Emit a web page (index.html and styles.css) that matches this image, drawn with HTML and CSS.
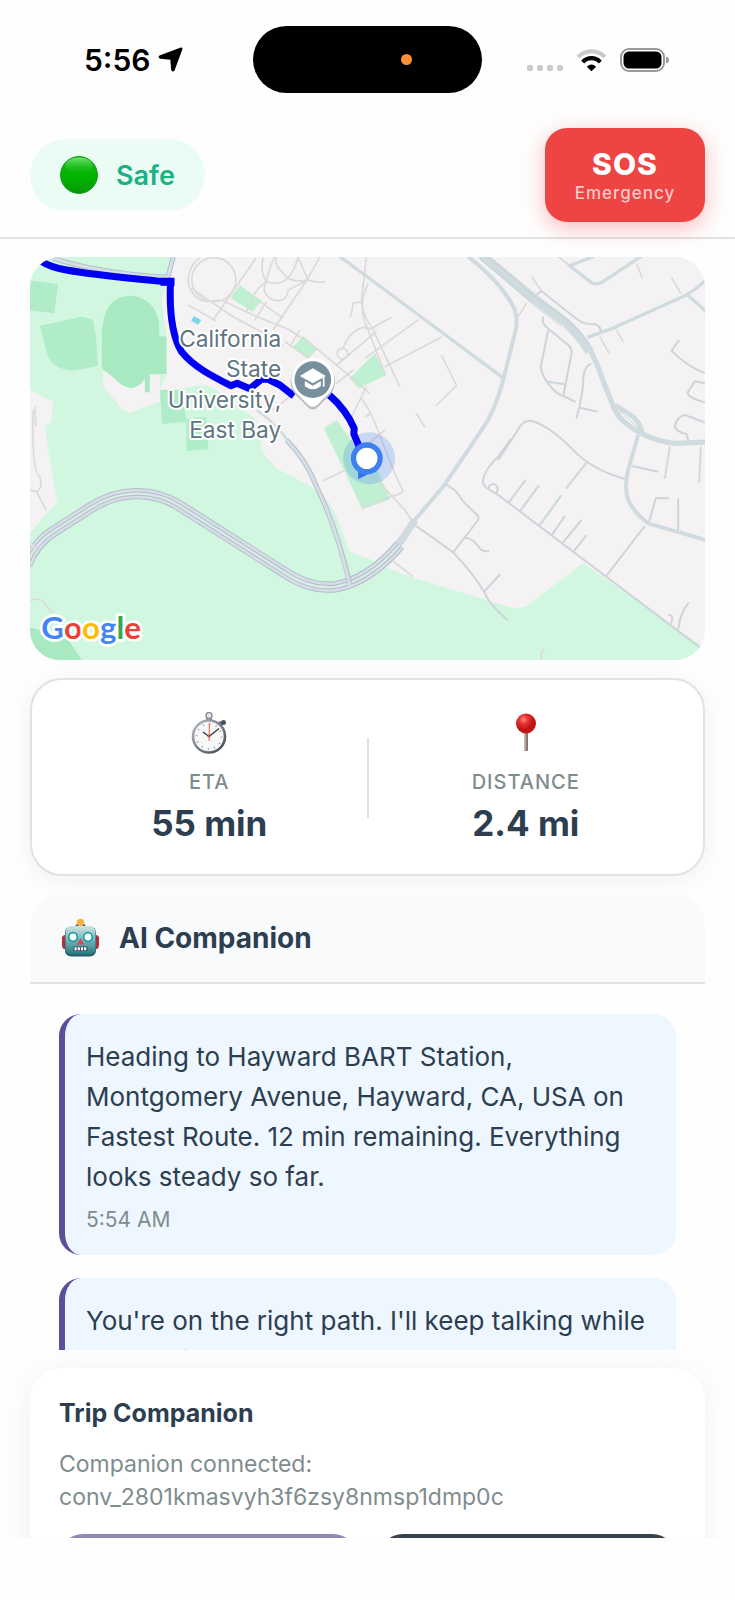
FILE: index.html
```
<!DOCTYPE html>
<html lang="en">
<head>
<meta charset="utf-8">
<meta name="viewport" content="width=device-width, initial-scale=1">
<title>Trip</title>
<link rel="stylesheet" href="styles.css">
</head>
<body>
<div class="app">
  <div class="status-bar">
    <div class="status-time">
      <span>5:56</span>
      <svg class="icon-location" viewBox="0 0 24 24" aria-hidden="true"><path d="M22.300 1.700L15 21.500Q14.300 23 13.800 21.500L13 11.800Q13 11 12 11L2.500 10.200Q1 9.800 2.500 9Z" stroke="#000" stroke-width="2.400" stroke-linejoin="round"/></svg>
    </div>
    <div class="island"><span class="island-dot"></span></div>
    <div class="status-icons">
      <svg class="icon-signal" viewBox="0 0 36 6" aria-hidden="true"><rect width="6" height="6" rx="2"/><rect x="10" width="6" height="6" rx="2"/><rect x="20" width="6" height="6" rx="2"/><rect x="30" width="6" height="6" rx="2"/></svg>
      <svg class="icon-wifi" viewBox="0 0 30 23" aria-hidden="true">
        <path d="M2 8.500A18.500 18.500 0 0 1 28 8.500" stroke="#cbcbcb"/>
        <path d="M6.500 13.500A11.500 11.500 0 0 1 23.500 13.500" stroke="#000"/>
        <path d="M10.500 18Q15 13.800 19.500 18L15 22.500Z" fill="#000"/>
      </svg>
      <svg class="icon-battery" viewBox="0 0 49 24" aria-hidden="true"><rect x="1" y="1" width="43" height="22" rx="8" fill="none" stroke="#999" stroke-width="2"/><rect x="3.500" y="3.500" width="38" height="17" rx="5.500"/><path d="M46 8.500Q49 9.500 49 12T46 15.500Z" fill="#999"/></svg>
    </div>
  </div>

  <header class="header">
    <div class="safe-pill">
      <svg class="icon-safe" viewBox="0 0 36 36" aria-hidden="true">
        <defs>
          <linearGradient id="ball" x2="0" y2="1"><stop offset="0" stop-color="#16b316"/><stop offset=".55" stop-color="#02b402"/><stop offset="1" stop-color="#049904"/></linearGradient>
          <linearGradient id="shine" x2="0" y2="1"><stop offset="0" stop-color="#6fe66c"/><stop offset="1" stop-color="#0fc00f" stop-opacity="0"/></linearGradient>
        </defs>
        <circle cx="18" cy="18" r="17.500" fill="url(#ball)" stroke="#0a8f12" stroke-width=".8"/>
        <ellipse cx="18" cy="9.500" rx="13" ry="8" fill="url(#shine)"/>
      </svg>
      <span>Safe</span>
    </div>
    <button class="sos" type="button"><span class="sos-title">SOS</span><span class="sos-sub">Emergency</span></button>
  </header>

  <main class="content">
    <section class="map" aria-label="Map">
      <svg class="map-canvas" viewBox="89 771 2028 1209" preserveAspectRatio="xMidYMid slice">
        <rect x="0" y="700" width="2300" height="1400" fill="#f4f2f3"/>
        <g transform="translate(0 720)">
          <path fill="#d1f7e1" d="M80 40H535L505 110L485 180L500 285V400L480 450L560 445Q615 425 650 450L770 540L790 640L830 685L935 740L990 790L1010 830L1050 935L1110 957L1165 985L1245 1015L1550 1107L1580 1098L1750 970L2130 1235V1280H80V890L172 785L145 630L135 560L155 545L160 485L80 445Z"/>
          <path fill="#f4f2f3" d="M310 395V440L340 475L365 508L390 518L480 485V405Z"/>
          <g fill="#b0ecc8">
            <path d="M80 120L175 132L163 220L80 210Z"/>
            <path d="M120 257L225 235Q240 225 280 240L288 285L295 377L225 392Q165 390 145 350Q135 320 120 257Z"/>
            <path fill="#a8e9c2" d="M310 250Q320 167 395 167Q465 175 478 250V287L500 290V402H450V457H435V415Q425 440 392 445Q365 440 340 412L306 385V275Z"/>
            <path d="M480 450H545L560 545L487 552Z"/><path d="M560 538L620 530L625 628L560 633Z"/>
            <path fill="#a8e9c2" d="M80 1160L200 1190L247 1262H80Z"/>
            <path fill="#bff0d1" d="M720 135L785 182L757 215L692 174Z"/>
            <path fill="#bff0d1" d="M910 288L952 325L922 357L880 322Z"/>
            <path fill="#bff0d1" d="M1050 415L1125 340L1160 405L1075 445Z"/>
            <path fill="#bff0d1" d="M972 565L1010 540L1060 610L1120 660L1172 778L1087 808L1030 685Z"/>
          </g>
          <path fill="#7fd5e8" d="M582 228L604 240L595 254L574 242Z"/>
        </g>

        <g class="road-path">
          <g transform="translate(0 720)">
            <circle cx="642" cy="119" r="66"/><path d="M600 55Q565 75 565 130Q580 180 620 185L660 180"/>
            <path d="M565 195L648 242M768 55L640 240M575 145L700 230L830 300L850 320M665 180L760 225L870 270L950 325L1040 400L1110 460"/>
            <path d="M790 50Q780 100 800 125Q760 150 740 215M825 50Q805 90 800 125Q870 150 895 50M895 50Q910 90 925 120Q870 130 850 100Q820 70 830 50M960 50Q925 120 880 180L820 270M925 120Q950 130 975 125M800 125Q780 160 820 180Q860 190 865 150L925 120M780 185L850 235M800 185L765 240M900 270L870 320M950 325L922 357L960 385M855 305L920 350M1060 390L1010 430M1100 440L1050 540M1100 50L1085 180Q1090 230 1115 260L1200 440M1085 185L1060 190L1055 220L1050 230M1105 260Q1050 265 1030 325M1010 375L1130 275M820 510L870 470"/>
            <circle cx="1028" cy="341" r="16"/>
          </g>
          <g transform="translate(1095 720)">
            <path d="M10 130Q-25 200 10 270L35 335L60 400M0 265H20L80 232M162 238L0 355M232 290L60 380M230 345L275 437L213 498M155 520L180 562M-10 475Q20 515 50 600L90 700L115 755L85 770M0 530L20 520"/>
            <path d="M580 50L612 75M920 112L948 160M815 70L833 115M750 262L775 305M705 290L733 340M500 110L528 150M485 190L460 230"/>
          </g>
          <g transform="translate(0 1320)"><path d="M970 122L1032 92M1100 90L1160 150L1215 210L1235 240M100 -90Q95 100 120 110Q130 145 110 155L140 213M110 155L90 150M108 -40L105 -100M90 482Q125 470 135 492L158 518"/></g>
          <g transform="translate(1095 1320)"><path d="M-10 205L90 165M80 360L145 410M530 660V640L536 628M0 20L60 -30"/></g>
        </g>

        <g class="road-small">
          <g transform="translate(1095 720)">
            <path d="M515 165L530 153L570 185L640 240Q660 255 690 252Q710 260 708 280M535 230Q530 250 545 262L610 315Q622 325 620 340L595 470M550 272L528 380Q530 405 550 430Q570 460 600 470L632 486M550 425L600 433M680 370Q658 380 656 410Q655 460 635 535M645 503L698 515M943 300L920 332Q960 375 1020 400M1020 430L990 424L968 458Q970 475 1030 490M1020 547L960 525Q935 530 930 560Q935 575 965 583L972 605"/>
            <path d="M400 660L440 600L465 560Q480 540 500 543Q550 555 620 625Q680 690 785 718"/>
          </g>
          <g transform="translate(1095 1320)">
            <path d="M440 -5L400 50Q350 100 355 130L362 142L400 165L1005 622M372 147Q370 132 388 132Q405 142 395 158M432 187L482 120M466 213L522 136M524 257L590 165M604 145L665 68M560 287L600 228M594 308L650 240M628 333L665 285M840 258L725 407M853 245L873 175H912M940 270V175M802 78L880 95"/>
            <path d="M240 130L272 152L300 190L340 228V240L265 337M150 255L265 337Q325 400 358 455Q370 490 428 540M302 293Q325 295 345 325Q355 337 373 332M358 455L407 402M940 568Q945 520 972 487M918 550Q930 525 910 525"/>
          </g>
        </g>

        <g class="road-main">
          <g transform="translate(0 720)">
            <path stroke-width="10" d="M1020 50L1095 105L1512 415"/>
            <path stroke-width="8" d="M770 510Q830 550 870 610"/>
          </g>
          <g transform="translate(1095 720)">
            <path stroke-width="12" d="M310 50Q400 120 440 190Q460 220 454 265L415 420Q400 480 370 540L310 630L235 740L150 840"/>
            <path stroke-width="28" d="M350 45L500 170L600 245Q640 280 675 335"/>
            <path stroke-width="16" d="M665 310Q700 375 710 410L750 510Q770 550 830 580Q880 605 930 610L1030 606"/>
            <path stroke-width="14" d="M752 495L790 520Q830 545 832 585"/>
            <path stroke-width="10" d="M612 75L680 128Q690 135 710 128L835 45M612 78L690 48M668 292L750 262L965 165Q1000 145 1030 112M968 165L1030 220"/>
          </g>
          <g transform="translate(1095 1320)">
            <path stroke-width="12" d="M820 -15L790 90Q775 150 795 190Q815 225 850 250L1030 302"/>
            <path stroke-width="6" d="M915 20L900 115M1008 20L1003 127M665 68L604 145M590 165L524 257M482 120L432 187M522 136L466 213"/>
            <path stroke-width="22" d="M150 240Q120 290 80 340"/>
          </g>
        </g>
        <g transform="translate(1095 720)" class="road-line"><path d="M370 50L510 170L610 242Q650 280 670 310M345 55L500 190L590 260M762 510L825 568"/></g>

        <g transform="translate(0 1320)" fill="none">
          <path class="hw-edge" d="M80 375Q105 310 160 275L270 205Q340 160 410 161Q480 160 540 198L850 395Q930 450 1010 440Q1110 420 1200 315"/>
          <path class="hw-fill" d="M80 375Q105 310 160 275L270 205Q340 160 410 161Q480 160 540 198L850 395Q930 450 1010 440Q1110 420 1200 315"/>
          <path class="hw-mid" d="M80 375Q105 310 160 275L270 205Q340 160 410 161Q480 160 540 198L850 395Q930 450 1010 440Q1110 420 1200 315"/>
          <path class="hw-core" d="M80 375Q105 310 160 275L270 205Q340 160 410 161Q480 160 540 198L850 395Q930 450 1010 440Q1110 420 1200 315"/>
          <path stroke="#b6bfcd" stroke-width="15" d="M860 0Q920 60 950 140Q1010 260 1050 432M520 -550L505 -490M160 -545Q300 -500 505 -488L500 -470"/>
          <path stroke="#d5dfe5" stroke-width="9" d="M860 0Q920 60 950 140Q1010 260 1050 436M520 -550L505 -490M160 -545Q300 -500 505 -488M85 305L110 330"/>
        </g>

        <g transform="translate(0 720)">
          <circle cx="1108" cy="655" r="78" fill="#4285f4" fill-opacity=".24"/>
          <path fill="none" stroke="#0000f2" stroke-width="21" stroke-linejoin="round" d="M122 62Q150 82 200 90C300 108 400 115 512 127C508 220 518 290 545 335C580 380 640 410 693 437L712 430L750 446L785 418H805L840 435L882 468M985 462Q1040 510 1063 565L1062 582L1078 620"/>
          <path fill="#0000f2" d="M482 113H524V137H482Z"/>
          <path fill="#2f74e8" d="M1075 690V718L1110 700Z"/>
          <circle cx="1101" cy="655" r="40" fill="#fff" stroke="#3f80f0" stroke-width="16"/>
          <g class="map-label">
            <text x="844" y="320">California</text><text x="844" y="412">State</text><text x="844" y="504">University,</text><text x="844" y="595">East Bay</text>
          </g>
          <path d="M939 356A64 64 0 0 1 985 465Q968 480 955 495Q939 512 923 495Q910 480 893 465A64 64 0 0 1 939 356Z" fill="#b9bec2" stroke="#b9bec2" stroke-width="4" transform="translate(0 3)"/>
          <path d="M939 354A64 64 0 0 1 985 463Q968 478 955 493Q939 508 923 493Q910 478 893 463A64 64 0 0 1 939 354Z" fill="#fff"/>
          <circle cx="939" cy="419" r="55" fill="#78909c"/>
          <path fill="#fff" d="M939 385L978 408L939 430L900 408ZM915 423L939 437L963 423V439Q939 457 915 439ZM969 410H974V440H969Z"/>
        </g>
        <text class="map-brand" x="124" y="1918"><tspan fill="#4285f4">G</tspan><tspan fill="#ea4335">o</tspan><tspan fill="#fbbc05">o</tspan><tspan fill="#4285f4">g</tspan><tspan fill="#34a853">l</tspan><tspan fill="#ea4335">e</tspan></text>
      </svg>
    </section>

    <section class="stats">
      <div class="stat">
        <svg class="stat-icon" viewBox="0 0 42 42" aria-hidden="true">
          <defs><linearGradient id="steel" x2="1" y2="1"><stop offset="0" stop-color="#b9bfc6"/><stop offset="1" stop-color="#3f454f"/></linearGradient></defs>
          <path d="M32 9L36 12L33 15L30 12Z" fill="#525966"/><circle cx="35.500" cy="10.500" r="2.500" fill="#4b5261"/>
          <rect x="18" y="3" width="6" height="6" fill="#858b93"/><circle cx="21" cy="3.500" r="3" fill="#e4e6e8" stroke="#8d939b" stroke-width="1.500"/>
          <circle cx="21" cy="24.500" r="16" fill="#f8f8f8" stroke="url(#steel)" stroke-width="2.600"/>
          <circle cx="21" cy="24.500" r="12.500" fill="none" stroke="#a3a7ad" stroke-width="1.800" stroke-dasharray="1.200 5.345"/>
          <path d="M21 24.500L31 16.500M21 24.500L15 20" stroke="#30343b" stroke-width="1.300"/><path d="M21.300 11V29" stroke="#f0735f" stroke-width="1.200"/><circle cx="21" cy="24" r="1.500" fill="#b55"/>
        </svg>
        <span class="stat-label">ETA</span>
        <span class="stat-value">55 min</span>
      </div>
      <div class="divider"></div>
      <div class="stat">
        <svg class="stat-icon" viewBox="0 0 42 42" aria-hidden="true">
          <defs><radialGradient id="pin" cx=".38" cy=".3"><stop offset="0" stop-color="#ff8b80"/><stop offset=".45" stop-color="#e8322f"/><stop offset="1" stop-color="#bd1518"/></radialGradient></defs>
          <rect x="19.500" y="18" width="3.500" height="21" rx="1" fill="#86736f"/><rect x="20" y="20" width="1.200" height="18" fill="#b9aaa6"/>
          <circle cx="21" cy="11.500" r="10" fill="url(#pin)"/>
        </svg>
        <span class="stat-label">DISTANCE</span>
        <span class="stat-value">2.4 mi</span>
      </div>
    </section>

    <section class="chat">
      <div class="chat-head">
        <svg class="icon-robot" viewBox="0 0 37 40" aria-hidden="true">
          <defs><linearGradient id="bot" x2="0" y2="1"><stop offset="0" stop-color="#cfe6e6"/><stop offset=".5" stop-color="#79b2b6"/><stop offset="1" stop-color="#237a80"/></linearGradient></defs>
          <path d="M0 19Q3 15 5 19V31H2Q0 30 0 27ZM37 19Q34 15 32 19V31H35Q37 30 37 27Z" fill="#b2303c"/>
          <ellipse cx="18.500" cy="8" rx="5" ry="2.500" fill="#594a82"/><circle cx="18.500" cy="4.500" r="3.700" fill="#f5b23f"/>
          <rect x="3" y="8.500" width="31" height="30" rx="6" fill="#285d69"/><rect x="3.500" y="8" width="30" height="28.500" rx="6" fill="url(#bot)"/>
          <circle cx="11" cy="19" r="4.300" fill="#fff" stroke="#15a0aa" stroke-width="1.700"/><circle cx="26" cy="19" r="4.300" fill="#fff" stroke="#15a0aa" stroke-width="1.700"/>
          <path d="M18.500 20L22 26.500H15Z" fill="#dd4450"/><rect x="11.500" y="28.500" width="14" height="4.500" rx="1" fill="#2e4f57"/>
          <path d="M12.500 30.700H25" stroke="#fff" stroke-width="3" stroke-dasharray="2.200 1"/>
        </svg>
        <h2 class="chat-title">AI Companion</h2>
      </div>
      <div class="messages">
        <article class="message"><p class="message-text">Heading to Hayward BART Station, Montgomery Avenue, Hayward, CA, USA on Fastest Route. 12 min remaining. Everything looks steady so far.</p><time class="message-time">5:54 AM</time></article>
        <article class="message"><p class="message-text">You're on the right path. I'll keep talking while you navigate.</p></article>
      </div>
    </section>

    <section class="trip">
      <h3 class="trip-title">Trip Companion</h3>
      <p class="trip-text">Companion connected: conv_2801kmasvyh3f6zsy8nmsp1dmp0c</p>
      <div class="trip-actions">
        <button class="trip-button" type="button" aria-label="Start" disabled></button>
        <button class="trip-button dark" type="button" aria-label="Stop"></button>
      </div>
    </section>
  </main>
</div>
</body>
</html>
```
FILE: styles.css
```
* { box-sizing: border-box; }
body { margin: 0; background: #fefefe; color: #2c3e50; font-family: Inter, "Noto Sans", sans-serif; }
h2, h3, p { margin: 0; }
button { border: 0; padding: 0; font: inherit; }

.app { display: flex; flex-direction: column; height: 100vh; padding-bottom: 62px; }

.status-bar { display: grid; grid-template-columns: 1fr 229px 1fr; align-items: center; flex: none; padding: 26px 0 0; }
.status-time { display: flex; align-items: center; gap: 7px; padding-left: 84px; color: #000; font-size: 30px; line-height: 36px; font-weight: 600; }
.icon-location { width: 25px; height: 25px; }
.island { display: flex; align-items: center; justify-content: flex-end; height: 67px; padding-right: 70px; border-radius: 34px; background: #000; }
.island-dot { width: 11px; height: 11px; border-radius: 50%; background: #ff9230; }
.status-icons { display: flex; align-items: center; justify-content: flex-end; gap: 13px; padding-right: 66px; }
.icon-signal { width: 36px; height: 6px; margin-top: 16px; fill: #cbcbcb; }
.icon-wifi { width: 31px; height: 24px; fill: none; stroke-width: 4; }
.icon-battery { width: 49px; height: 24px; }

.header { position: relative; z-index: 1; display: flex; flex: none; align-items: center; justify-content: space-between; padding: 35px 30px 15px; border-bottom: 2px solid #e2e2e2; }
.safe-pill { display: flex; align-items: center; gap: 18px; height: 72px; padding: 0 30px; border-radius: 36px; background: #ebfcf5; color: #1bb183; font-size: 27px; font-weight: 600; }
.icon-safe { width: 38px; height: 38px; }
.sos { display: flex; flex-direction: column; align-items: center; justify-content: center; width: 160px; height: 94px; border-radius: 22px; background: #ef4444; color: #fff; box-shadow: 0 6px 22px rgba(239, 68, 68, .36); }
.sos-title { font-size: 30px; line-height: 36px; font-weight: 800; letter-spacing: 1px; }
.sos-sub { font-size: 17px; line-height: 22px; font-weight: 500; letter-spacing: 1px; color: #fbc9c9; }

.content { display: flex; flex: 1; flex-direction: column; gap: 18px; min-height: 0; padding: 18px 30px 0; overflow: hidden; }
.content > * { flex: none; }

.map { border-radius: 30px; overflow: hidden; }
.map-canvas { display: block; width: 100%; height: 403px; }
.road-path { fill: none; stroke: #dcd9db; stroke-width: 5; }
.road-small { fill: none; stroke: #cdd4da; stroke-width: 6; }
.road-main { fill: none; stroke: #d0dbe0; stroke-linejoin: round; }
.road-line { fill: none; stroke: #bdcad3; stroke-width: 2; }
.hw-edge { stroke: #b4bccb; stroke-width: 34; }
.hw-fill { stroke: #d5dfe5; stroke-width: 28; }
.hw-mid { stroke: #b4bccb; stroke-width: 13; }
.hw-core { stroke: #d9ebe7; stroke-width: 7; }
.map-label { fill: #5f7582; stroke: #fff; stroke-width: 12; stroke-linejoin: round; paint-order: stroke; font-size: 68px; text-anchor: end; }
.map-brand { stroke: #fff; stroke-width: 16; stroke-linejoin: round; paint-order: stroke; font: 700 94px Lato, sans-serif; }

.stats { display: flex; align-items: center; padding: 32px 20px 30px; border: 2px solid #e2e2e2; border-radius: 32px; background: #fff; box-shadow: 0 4px 24px rgba(0, 0, 0, .06); }
.stat { display: flex; flex: 1; flex-direction: column; align-items: center; }
.stat-icon { width: 42px; height: 42px; margin-bottom: 15px; }
.stat-label { margin-bottom: 7px; color: #7f8c8d; font-size: 20px; line-height: 26px; font-weight: 500; letter-spacing: 1px; }
.stat-value { font-size: 35px; line-height: 42px; font-weight: 700; }
.divider { width: 2px; height: 80px; background: #e2e2e2; }

.chat-head { display: flex; align-items: center; gap: 20px; height: 90px; padding: 0 32px; border-bottom: 2px solid #e2e2e2; border-radius: 30px 30px 0 0; background: #f8fafc; }
.icon-robot { width: 37px; height: 40px; }
.chat-title { font-size: 28px; line-height: 34px; font-weight: 700; }
.messages { display: flex; flex-direction: column; gap: 23px; height: 366px; padding: 30px 29px 0; overflow: hidden; }
.message { flex: none; padding: 23px 18px 20px 21px; border-left: 6px solid #5b4f99; border-radius: 22px; background: #eef7ff; }
.message-text { font-size: 26px; line-height: 40px; }
.message-time { display: block; margin-top: 8px; color: #7f8c8d; font-size: 21px; line-height: 30px; }

.trip { padding: 28px 29px; border-radius: 32px; background: #fff; box-shadow: 0 4px 30px rgba(0, 0, 0, .06); }
.trip-title { margin-bottom: 18px; font-size: 25px; line-height: 34px; font-weight: 700; }
.trip-text { margin-bottom: 20px; color: #7f8c8d; font-size: 23px; line-height: 33px; overflow-wrap: anywhere; }
.trip-actions { display: grid; grid-template-columns: 1fr 1fr; gap: 22px; }
.trip-button { height: 80px; border-radius: 24px; background: #9289b3; }
.trip-button.dark { background: #37424c; }
```
